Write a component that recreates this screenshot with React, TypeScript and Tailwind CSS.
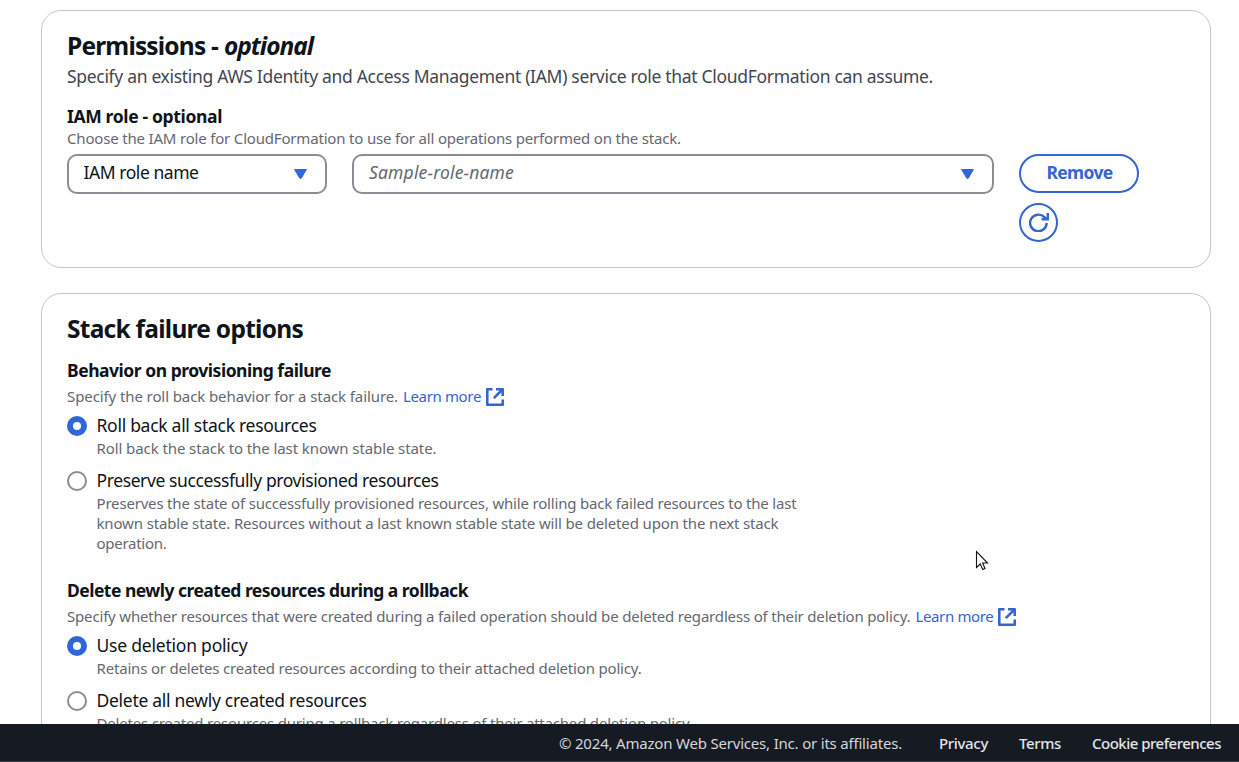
import type { ReactNode } from "react";

function ExternalIcon() {
  return (
    <svg className="ml-1 size-5 shrink-0" viewBox="0 0 20 20" fill="none" stroke="#3465d0" strokeWidth="2.6" strokeLinejoin="round">
      <path d="M7.5 2.25H2.25V17.75H17.75V12.5M11 2.25H17.75V9M17.25 2.75L8.8 11.2" />
    </svg>
  );
}

function Radio({ checked = false }: { checked?: boolean }) {
  return (
    <span
      className={
        checked
          ? "size-5 shrink-0 rounded-full border-[6px] border-[#2f66d8] bg-white"
          : "size-5 shrink-0 rounded-full border-2 border-[#8c8c94] bg-white"
      }
    />
  );
}

function Option({ title, checked, children }: { title: ReactNode; checked?: boolean; children: ReactNode }) {
  return (
    <div className="flex gap-[9.5px]">
      <div className="flex h-6 items-center">
        <Radio checked={checked} />
      </div>
      <div>
        <div className="h-[25px] text-[17.5px] leading-[23px] text-[#0f141a]">{title}</div>
        <div className="-mt-px mb-px text-[15px] leading-5 text-[#656871]">{children}</div>
      </div>
    </div>
  );
}

function Caret() {
  return (
    <svg className="h-[10px] w-[13px]" viewBox="0 0 13 10" fill="#2f66d8" stroke="#2f66d8" strokeWidth="1" strokeLinejoin="round">
      <path d="M.6.5H12.4L7.2 9.3H5.8Z" />
    </svg>
  );
}

export default function App() {
  return (
    <div className="relative flex h-[762px] w-[1239px] flex-col overflow-hidden bg-white font-['Noto_Sans',sans-serif] whitespace-nowrap">
      <main className="flex min-h-0 flex-1 flex-col overflow-hidden pt-2.5 pr-7 pl-[41px]">
        <section className="h-[258px] shrink-0 rounded-[20px] border border-[#c6c6cd] px-[25px] pt-5">
          <h2 className="flex h-[30px] gap-1.5 text-[24.5px] leading-[30px] font-bold text-[#0f141a]">
            <span className="tracking-[-0.822px]">Permissions -</span>
            <em className="tracking-[-1.031px]">optional</em>
          </h2>
          <p className="mt-[3px] h-[25px] text-[17.5px] leading-[24px] tracking-[-0.313px] text-[#424650]">
            Specify an existing AWS Identity and Access Management (IAM) service role that CloudFormation can assume.
          </p>
          <h3 className="mt-[15px] h-[25px] text-[17.5px] leading-[24px] font-bold tracking-[-0.346px] text-[#0f141a]">IAM role - optional</h3>
          <p className="h-5 text-[15px] leading-[18px] tracking-[-0.182px] text-[#656871]">
            Choose the IAM role for CloudFormation to use for all operations performed on the stack.
          </p>
          <div className="mt-[5px] flex items-start gap-[25px]">
            <div className="flex h-10 w-[260px] items-center justify-between rounded-[10px] border-2 border-[#8c8c94] pr-[18px] pl-[14.5px] text-[17.5px] text-[#0f141a]">
              <span className="pb-[3px] tracking-[-0.447px]">IAM role name</span>
              <Caret />
            </div>
            <div className="flex h-10 w-[642px] items-center justify-between rounded-[10px] border-2 border-[#8c8c94] pr-[18px] pl-[15px] text-[17.5px] text-[#656871] italic">
              <span className="pb-[3px] tracking-[0.171px]">Sample-role-name</span>
              <Caret />
            </div>
            <div className="flex flex-col gap-2.5">
              <button className="h-[39px] w-[120px] rounded-full border-2 border-[#3465d0] pb-0.5 pl-px text-[17.5px] font-bold tracking-[-0.672px] text-[#3465d0]">
                Remove
              </button>
              <button className="flex size-[39px] items-center justify-center rounded-full border-2 border-[#3465d0]">
                <svg className="mb-0.5 ml-px size-5" viewBox="0 0 20 20" fill="none" stroke="#3465d0" strokeWidth="2.4">
                  <path d="M17.7 11A8.3 8.3 0 1 1 15.4 5.2L17.6 7M18.8 1V7.2H12.6" />
                </svg>
              </button>
            </div>
          </div>
        </section>

        <section className="mt-[25px] h-[600px] shrink-0 rounded-[20px] border border-[#c6c6cd] px-[25px] pt-5">
          <h2 className="h-[30px] text-[24.5px] leading-[30px] font-bold tracking-[-0.737px] text-[#0f141a]">Stack failure options</h2>
          <h3 className="mt-[15px] h-6 text-[17.5px] leading-[22px] font-bold tracking-[-0.476px] text-[#0f141a]">Behavior on provisioning failure</h3>
          <p className="mt-1 flex h-5 items-center text-[15px] leading-5 text-[#656871]">
            <span className="pb-0.5 tracking-[-0.096px]">Specify the roll back behavior for a stack failure.</span>
            <a className="ml-[5px] flex items-center text-[#3465d0]">
              <span className="pb-0.5 tracking-[-0.356px]">Learn more</span>
              <ExternalIcon />
            </a>
          </p>
          <div className="mt-[7px] flex flex-col gap-2.5">
            <Option checked title={<span className="tracking-[-0.283px]">Roll back all stack resources</span>}>
              <span className="tracking-[-0.09px]">Roll back the stack to the last known stable state.</span>
            </Option>
            <Option title={<span className="tracking-[-0.394px]">Preserve successfully provisioned resources</span>}>
              <span className="tracking-[-0.183px]">Preserves the state of successfully provisioned resources, while rolling back failed resources to the last</span>
              <br />
              <span className="tracking-[-0.144px]">known stable state. Resources without a last known stable state will be deleted upon the next stack</span>
              <br />
              <span className="tracking-[-0.273px]">operation.</span>
            </Option>
          </div>
          <h3 className="mt-[25px] h-6 text-[17.5px] leading-[22px] font-bold tracking-[-0.519px] text-[#0f141a]">
            Delete newly created resources during a rollback
          </h3>
          <p className="mt-1 flex h-5 items-center text-[15px] leading-5 text-[#656871]">
            <span className="pb-0.5 tracking-[-0.173px]">
              Specify whether resources that were created during a failed operation should be deleted regardless of their deletion policy.
            </span>
            <a className="ml-[5px] flex items-center text-[#3465d0]">
              <span className="pb-0.5 tracking-[-0.356px]">Learn more</span>
              <ExternalIcon />
            </a>
          </p>
          <div className="mt-[7px] flex flex-col gap-2.5">
            <Option checked title={<span className="tracking-[-0.216px]">Use deletion policy</span>}>
              <span className="tracking-[-0.183px]">Retains or deletes created resources according to their attached deletion policy.</span>
            </Option>
            <Option title={<span className="tracking-[-0.288px]">Delete all newly created resources</span>}>
              <span className="tracking-[-0.195px]">Deletes created resources during a rollback regardless of their attached deletion policy.</span>
            </Option>
          </div>
        </section>
      </main>

      <footer className="flex h-[38px] items-center justify-end border-b border-[#3a3d45] bg-[#161a23] pt-0.5 pr-[18px] text-[15px] text-[#d5d6da]">
        <span className="tracking-[-0.196px]">© 2024, Amazon Web Services, Inc. or its affiliates.</span>
        <a className="ml-[37px] font-medium tracking-[-0.333px] text-[#e4e5e9]">Privacy</a>
        <a className="ml-[31px] font-medium tracking-[-0.369px] text-[#e4e5e9]">Terms</a>
        <a className="ml-[31px] font-medium tracking-[-0.503px] text-[#e4e5e9]">Cookie preferences</a>
      </footer>

      <svg className="absolute top-[550px] left-[975px] h-[22px] w-[14px]" viewBox="0 0 14 22" fill="white" stroke="#111" strokeWidth="1.1">
        <path d="M1.5 1.5V17.5L5.2 14L7.8 19.5L10 18.5L7.6 13H12.5Z" />
      </svg>
    </div>
  );
}
